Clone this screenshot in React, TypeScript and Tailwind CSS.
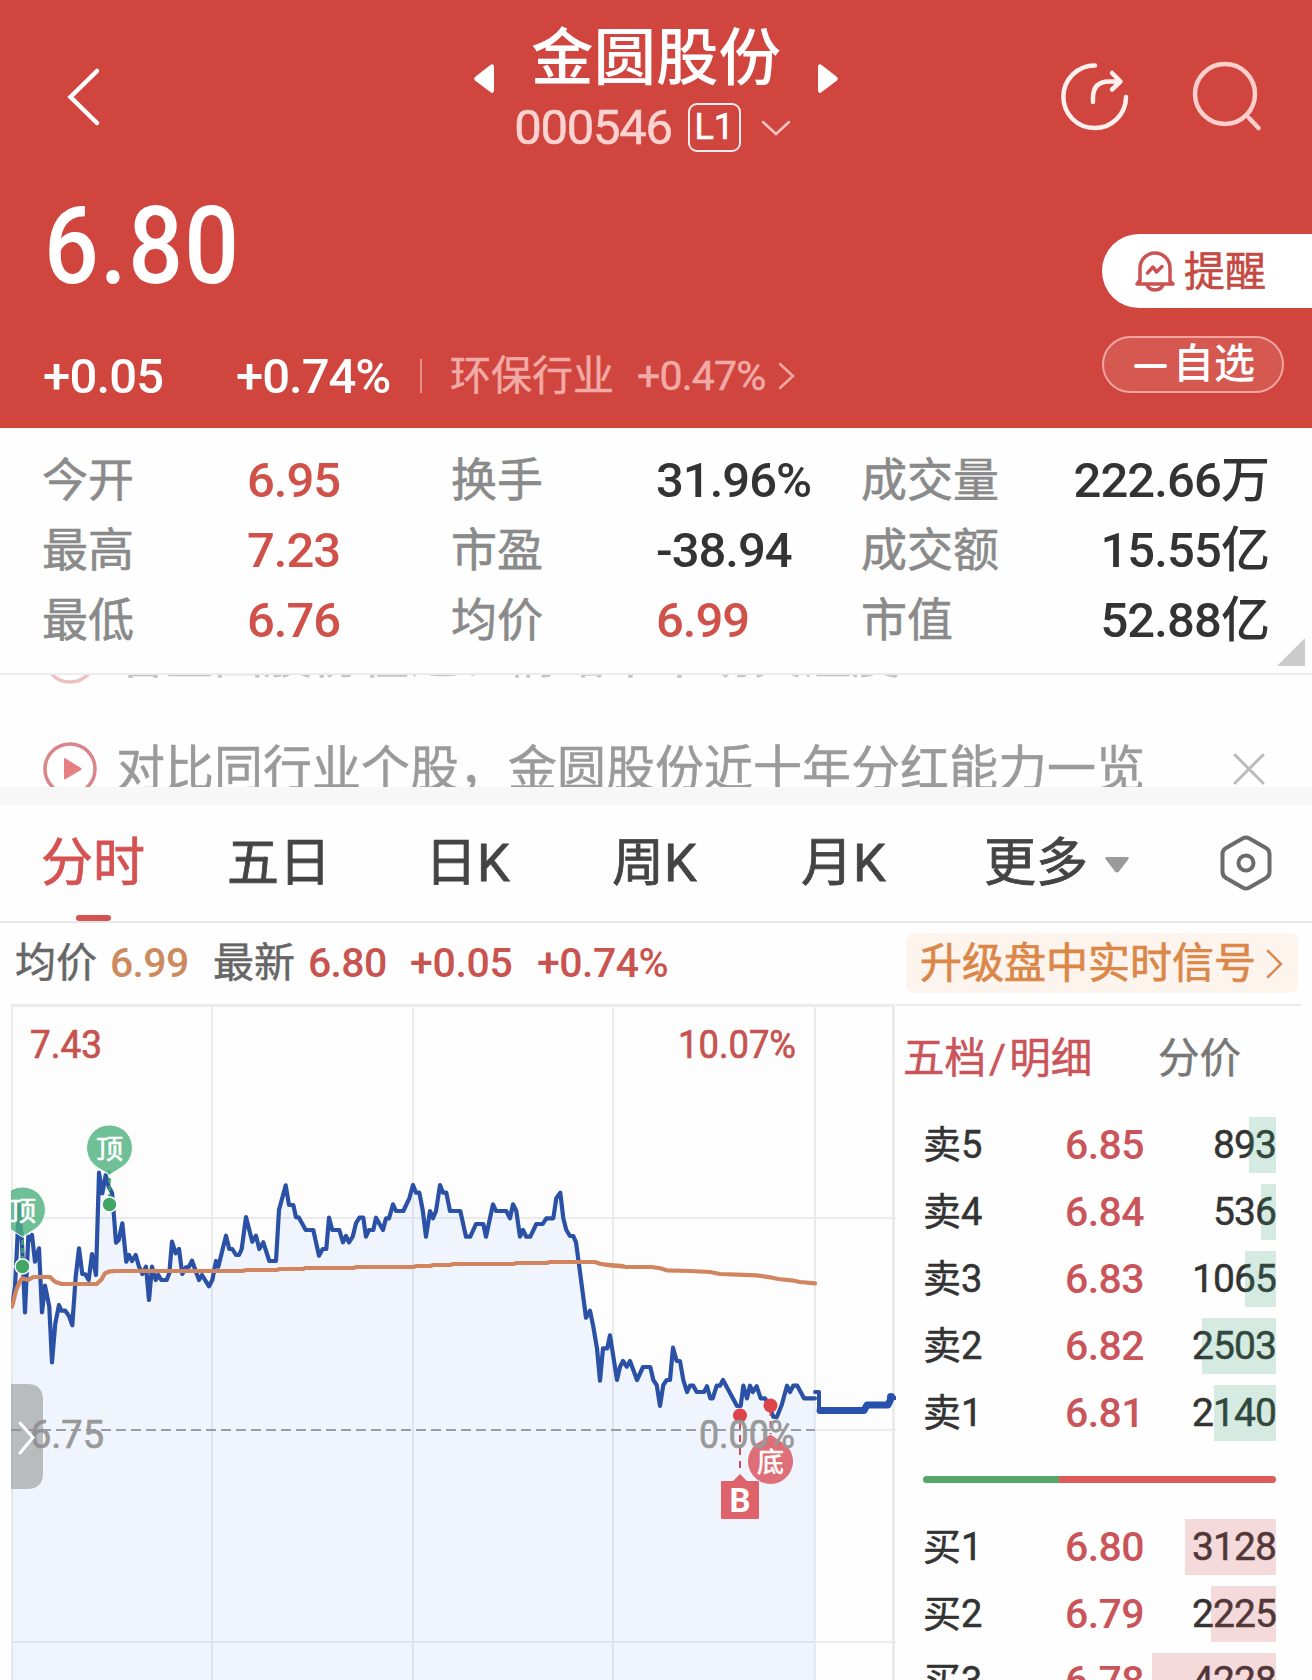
import React from 'react';

interface OrderLevel {
  label: string;
  price: string;
  volume: string;
  bar: number;
}

const SELLS: OrderLevel[] = [
  { label: '卖5', price: '6.85', volume: '893', bar: 27 },
  { label: '卖4', price: '6.84', volume: '536', bar: 15 },
  { label: '卖3', price: '6.83', volume: '1065', bar: 31 },
  { label: '卖2', price: '6.82', volume: '2503', bar: 74 },
  { label: '卖1', price: '6.81', volume: '2140', bar: 62 },
];

const BUYS: OrderLevel[] = [
  { label: '买1', price: '6.80', volume: '3128', bar: 91 },
  { label: '买2', price: '6.79', volume: '2225', bar: 65 },
  { label: '买3', price: '6.78', volume: '4228', bar: 124 },
];

const STATS = [
  [
    { label: '今开', value: '6.95', up: true },
    { label: '换手', value: '31.96%', up: false },
    { label: '成交量', value: '222.66万', up: false },
  ],
  [
    { label: '最高', value: '7.23', up: true },
    { label: '市盈', value: '-38.94', up: false },
    { label: '成交额', value: '15.55亿', up: false },
  ],
  [
    { label: '最低', value: '6.76', up: true },
    { label: '均价', value: '6.99', up: true },
    { label: '市值', value: '52.88亿', up: false },
  ],
];

// Each segment: origin in px, points in thirds of a px
type Segment = { x: number; y: number; pts: string };

const PRICE: Segment[] = [
  {
    x: 0,
    y: 76,
    pts: '38,670 45,620 50,520 57,375 66,490 75,697 85,470 90,480 96,465 105,545 117,505 126,697 135,617 148,680 156,847 166,730 177,675 184,692 196,692 207,708 217,736 227,590 237,505 247,582 256,583 266,600 276,522 288,585 297,278 307,340 317,285 326,320 336,338 342,410 348,488 356,480 367,430 379,545 387,525 396,543 407,525 417,560 427,582 438,560 447,660 456,560 467,600 475,585 484,600 500,600 508,580 516,485 527,520 537,507 547,582 558,562 567,560 576,542 597,600 606,585 627,619 637,600 648,543 655,560 678,467 688,507 697,507 708,525 717,525 725,507 738,411 757,485 768,467 778,507 790,487 808,543 828,543 837,390 857,316 867,375 880,375 888,412 896,412',
  },
  {
    x: 300,
    y: 136,
    pts: '17,270 40,270 57,347 68,327 79,327 87,233 97,270 118,270 129,307 138,288 147,307 158,290 168,250 178,233 190,233 198,290 207,270 220,270 228,233 249,270 258,235 267,235 279,193 288,213 310,213 328,175 339,135 348,158 358,158 368,210 378,290 390,213 399,235 408,213 420,135 429,158 439,158 450,213 481,213 498,290 511,290 528,252 550,252 558,290 579,193 588,213 619,213 630,235 639,193 649,213 660,290 669,270 679,290 691,290 709,252 728,252 739,235 760,235 769,175 781,158 790,235 799,270 810,288 820,288 828,307 838,380 858,533 870,512 880,560 891,625 900,722 909,625 922,625 930,586',
  },
  {
    x: 600,
    y: 176,
    pts: '51,600 60,560 69,543 80,560 90,543 111,600 129,561 151,561 160,600 170,615 180,678 190,615 200,600 210,600 219,503 230,543 240,543 250,600 261,636 270,617 280,617 290,636 312,636 321,619 331,655 338,655 350,617 360,617 369,600 411,678 422,678 430,617 441,655 450,617 458,636 470,619 482,655 495,655 505,670 520,710 530,712 545,675 561,617 570,636 580,617 592,617 612,655 645,655',
  },
];

const AVERAGE: Segment[] = [
  {
    x: 0,
    y: 76,
    pts: '36,680 48,632 57,610 66,595 85,600 100,591 150,591 165,605 185,612 290,612 305,598 315,580 330,574 350,573 727,573 740,570 830,570 840,567 910,567',
  },
  {
    x: 300,
    y: 136,
    pts: '15,384 160,384 170,381 340,381 350,378 390,378 400,375 450,375 460,372 640,372 650,369 740,369 750,366 885,366 900,371 920,375 945,378 970,378',
  },
  {
    x: 600,
    y: 176,
    pts: '0,252 45,257 80,261 155,261 180,265 200,271 270,273 330,276 360,282 410,284 470,286 510,292 535,297 575,301 600,306 645,310',
  },
];

const toPoints = (segments: Segment[]) =>
  segments
    .flatMap(s =>
      s.pts.split(' ').map(p => {
        const [px, py] = p.split(',').map(Number);
        return `${(s.x + px / 3).toFixed(1)},${(s.y + py / 3).toFixed(1)}`;
      })
    )
    .join(' ');

const pricePoints = toPoints(PRICE);
const averagePoints = toPoints(AVERAGE);

const Header: React.FC = () => (
  <header className="h-[428px] bg-[#d0453e] text-white">
    <div className="h-[180px] flex justify-between">
      <svg width="120" height="180" viewBox="0 0 120 180" fill="none" stroke="#fff" strokeWidth="4.5" strokeLinecap="round">
        <path d="M97 71 70.5 97 97 123" />
      </svg>
      <div className="flex flex-col items-center w-[400px] pt-[22px]">
        <div className="flex items-start justify-between w-[364px] h-[80px]">
          <svg width="20" height="30" viewBox="0 0 20 30" className="mt-[42px]" fill="#fff">
            <path d="M17 0.6Q20 -0.5 20 3V26Q20 30 17 28.5L1 16.5Q-0.5 15 1 13Z" />
          </svg>
          <h1 className="mt-[4px] text-[62.5px] leading-[66px] font-medium">金圆股份</h1>
          <svg width="20" height="30" viewBox="0 0 20 30" className="mt-[42px]" fill="#fff">
            <path d="M3 0.6Q0 -0.5 0 3V26Q0 30 3 28.5L19 16.5Q20.5 15 19 13Z" />
          </svg>
        </div>
        <div className="flex items-center h-[50px] pr-[7px]">
          <span className="text-[49px] leading-none tracking-[-1.3px] text-[#fbd3d1] [-webkit-text-stroke:0.5px]">000546</span>
          <span className="flex items-center justify-center w-[53px] h-[49px] ml-[16px] border-2 border-white/90 rounded-[9px] text-[36px] leading-none [-webkit-text-stroke:0.6px]">L1</span>
          <svg width="30" height="16" viewBox="0 0 30 16" className="ml-[20px] mt-[2px]" fill="none" stroke="#f8c3c0" strokeWidth="2.5" strokeLinecap="round">
            <path d="M2 2 15 14 28 2" />
          </svg>
        </div>
      </div>
      <svg width="272" height="180" viewBox="1040 0 272 180" className="-ml-[152px]" fill="none" strokeLinecap="round" strokeLinejoin="round" strokeWidth="4.5">
        <g stroke="#fff0ef">
          <path d="M1095 65.5A31.3 31.3 0 1 0 1126 97" />
          <path d="M1093 102V98Q1093 81.5 1109 81.5H1119M1112 73 1120.5 81.5 1112 89.5" />
        </g>
        <g stroke="#ffcfcd">
          <circle cx="1225" cy="94" r="30" />
          <path d="M1249 118 1258.5 128" />
        </g>
      </svg>
    </div>
    <div className="flex justify-between">
      <div>
        <div className="ml-[44px] mt-[13px] text-[107px] leading-none font-medium tracking-[1.5px] origin-left scale-x-90">6.80</div>
        <div className="flex items-center h-[54px] mt-[49px] pl-[43px] leading-none">
          <span className="w-[193px] text-[49px] font-medium tracking-[-0.8px]">+0.05</span>
          <span className="w-[184px] text-[49px] font-medium tracking-[-1px]">+0.74%</span>
          <span className="w-[2px] h-[34px] bg-white/40" />
          <span className="ml-[28px] text-[41px] text-[#f2aaa7] [-webkit-text-stroke:0.5px]">环保行业</span>
          <span className="ml-[23px] text-[41px] text-[#f2aaa7] tracking-[-0.8px] [-webkit-text-stroke:0.5px]">+0.47%</span>
          <svg width="18" height="28" viewBox="0 0 18 28" className="ml-[13px]" fill="none" stroke="#f2aaa7" strokeWidth="2.5" strokeLinecap="round">
            <path d="M2 2 15 14 2 26" />
          </svg>
        </div>
      </div>
      <div className="w-[210px] pt-[54px]">
        <button className="flex items-center w-full h-[74px] pl-[33px] bg-white rounded-l-full text-[41px] leading-none text-[#c44a43] [-webkit-text-stroke:0.6px]">
          <svg width="40" height="42" viewBox="0 0 40 42" fill="none" stroke="#cb5152" strokeWidth="3.5" strokeLinecap="round" strokeLinejoin="round">
            <path d="M5 31V18A15 15 0 0 1 35 18V31L38 34H2L5 30M12 34A8 6 0 0 0 28 34" />
            <path d="M12.5 23 18 17 21.5 22 27 16.5" />
          </svg>
          <span className="ml-[9px] pt-[2px]">提醒</span>
        </button>
        <button className="flex items-center w-[182px] h-[57px] mt-[28px] pl-[30px] border-2 border-[#f0a5a1] bg-white/10 rounded-full text-[41px] leading-none font-medium">
          <span className="w-[33px] h-[4px] rounded-full bg-white mt-[2px]" />
          <span className="ml-[6px]">自选</span>
        </button>
      </div>
    </div>
  </header>
);

const Stats: React.FC = () => (
  <section className="relative h-[247px] pt-[17px] pl-[42px] pr-[43px] border-b-2 border-[#ececec]">
    {STATS.map((row, i) => (
      <div key={i} className="grid grid-cols-[205px_204px_205px_205px_145px_1fr] items-center h-[70px] leading-none">
        {row.map((s, j) => (
          <React.Fragment key={s.label}>
            <span className="text-[46px] text-[#8a8a8a] [-webkit-text-stroke:0.6px]">{s.label}</span>
            <span
              className={
                'text-[49px] font-medium whitespace-nowrap ' +
                (s.up ? 'text-[#cf5149] ' : 'text-[#333] ') +
                (j === 2 ? 'text-right tracking-[-0.9px]' : 'tracking-[-1px]')
              }
            >
              {s.value}
            </span>
          </React.Fragment>
        ))}
      </div>
    ))}
    <svg width="28" height="28" viewBox="0 0 28 28" className="absolute right-[7px] bottom-[7px]" fill="#ccc">
      <path d="M28 0V28H0Z" />
    </svg>
  </section>
);

const News: React.FC = () => (
  <section className="h-[130px] border-b-[18px] border-[#f7f7f7] overflow-hidden text-[49px] leading-none [-webkit-text-stroke:0.5px]">
    <div className="flex items-center h-[54px] -mt-[46px] pl-[43px] text-[#c4c4c4]">
      <svg width="54" height="56" viewBox="0 0 54 56" fill="none" stroke="#ecc0c1" strokeWidth="3.5">
        <circle cx="27" cy="29" r="25" />
      </svg>
      <span className="ml-[19px]">看金圆股份在近、情绪中市场关注度</span>
    </div>
    <div className="flex items-center h-[54px] mt-[59px] pl-[43px] pr-[47px] text-[#9a9a9a]">
      <svg width="54" height="54" viewBox="0 0 54 54">
        <circle cx="27" cy="27" r="25" fill="none" stroke="#d98689" strokeWidth="3.5" />
        <path d="M21 17Q21 15.5 22.5 16.5L38 26Q39 27 38 28L22.5 37Q21 38 21 36.5Z" fill="#e57f82" />
      </svg>
      <span className="ml-[19px] flex-1 whitespace-nowrap">对比同行业个股，金圆股份近十年分红能力一览</span>
      <svg width="32" height="32" viewBox="0 0 32 32" fill="none" stroke="#bbb" strokeWidth="3" strokeLinecap="round">
        <path d="M2 2 30 30M30 2 2 30" />
      </svg>
    </div>
  </section>
);

const Tabs: React.FC = () => (
  <nav className="flex items-center h-[118px] border-b-2 border-[#e9e9e9] text-[52px] leading-none text-[#444] [-webkit-text-stroke:0.8px]">
    <div className="relative flex items-center h-full pt-[2px] ml-[41px] w-[186px] text-[#d55252]">
      分时
      <span className="absolute left-[35px] bottom-0 w-[35px] h-[6px] rounded-full bg-[#d55252]" />
    </div>
    <span className="w-[198px] pt-[2px]">五日</span>
    <span className="w-[187px] pt-[2px]">日K</span>
    <span className="w-[189px] pt-[2px]">周K</span>
    <span className="w-[183px] pt-[2px]">月K</span>
    <span className="pt-[2px]">更多</span>
    <svg width="24" height="16" viewBox="0 0 24 16" className="ml-[17px] mt-[3px]" fill="#9a9a9a">
      <path d="M2 0H22Q24.5 0 23.5 2L14 14.5Q12 16.5 10 14.5L0.5 2Q-0.5 0 2 0Z" />
    </svg>
    <svg width="52" height="56" viewBox="0 0 52 56" className="ml-auto mr-[40px]" fill="none" stroke="#6b6b6b" strokeWidth="4" strokeLinejoin="round">
      <path d="M23 3.2Q26 1.6 29 3.2L46 13Q49.5 15 49.5 19V37Q49.5 41 46 43L29 52.8Q26 54.4 23 52.8L6 43Q2.5 41 2.5 37V19Q2.5 15 6 13Z" />
      <circle cx="26" cy="28" r="7.5" />
    </svg>
  </nav>
);

const PriceSummary: React.FC = () => (
  <div className="flex items-center h-[81px] pl-[15px] pr-[14px] text-[41px] leading-none text-[#666]">
    <span className="[-webkit-text-stroke:0.5px]">均价</span>
    <span className="ml-[13px] w-[103px] tracking-[-0.7px] text-[#cb8b5f] font-medium">6.99</span>
    <span className="[-webkit-text-stroke:0.5px]">最新</span>
    <span className="ml-[13px] w-[102px] tracking-[-0.7px] text-[#c9534e] font-medium">6.80</span>
    <span className="w-[127px] tracking-[-0.3px] text-[#c9534e] font-medium">+0.05</span>
    <span className="tracking-[-0.5px] text-[#c9534e] font-medium">+0.74%</span>
    <button className="flex items-center ml-auto mb-[2px] w-[392px] h-[60px] pl-[14px] rounded-[8px] bg-[#fdf4ee] text-[#da8748] text-[42px] [-webkit-text-stroke:0.7px]">
      <span className="pt-[3px] whitespace-nowrap">升级盘中实时信号</span>
      <svg width="18" height="30" viewBox="0 0 18 30" className="shrink-0 ml-[10px] mt-[2px]" fill="none" stroke="#d98a50" strokeWidth="2.5" strokeLinecap="round">
        <path d="M2 2 15 15 2 28" />
      </svg>
    </button>
  </div>
);

const TopPin: React.FC<{ x: number; y: number }> = ({ x, y }) => (
  <g>
    <path d={`M${x} ${y + 22}V${y + 52}`} stroke="#3fa565" strokeWidth="2.5" strokeDasharray="5 3" />
    <path
      d={`M${x} ${y + 27}L${x - 12} ${y + 19.5}A23 23 0 1 1 ${x + 12} ${y + 19.5}Z`}
      fill="#4bb07c"
      fillOpacity="0.8"
      stroke="#fff"
      strokeWidth="1"
    />
    <text x={x} y={y + 10.5} textAnchor="middle" fontSize="27" fill="#fff" stroke="#fff" strokeWidth="0.6">顶</text>
    <circle cx={x} cy={y + 56.5} r="7.5" fill="#43a563" stroke="#fff" strokeWidth="1.5" />
  </g>
);

const Chart: React.FC = () => (
  <svg width="896" height="676" viewBox="0 0 896 676" className="shrink-0">
    <defs>
      <clipPath id="plot">
        <rect x="11" y="0" width="885" height="676" />
      </clipPath>
    </defs>
    <rect x="12" y="2" width="882" height="674" fill="#fdfdfd" />
    <g stroke="#ebebeb" strokeWidth="2">
      <path d="M11 1.5H895" strokeWidth="3" />
      <path d="M12 0V676M212 0V676M413 0V676M613 0V676M815 0V676" />
      <path d="M893.5 0V676" strokeWidth="3" />
      <path d="M11 214H896M11 638H896M815 426H896" />
    </g>
    <polygon points={`12,676 ${pricePoints} 815,676`} fill="#3078ff" fillOpacity="0.063" />
    <path d="M11 426H815" stroke="#9d9ea3" strokeWidth="2" strokeDasharray="10 5" />

    <g clipPath="url(#plot)" fill="none" strokeLinejoin="round" strokeLinecap="round">
      <polyline points={pricePoints} stroke="#2a51a6" strokeWidth="4.2" />
      <path d="M815 388H819V406" stroke="#2a51a6" strokeWidth="4" />
      <path d="M820 406.5H864L867 401H888L891 394.5" stroke="#2850ae" strokeWidth="7" />
      <circle cx="891" cy="393" r="4" fill="#2850ae" />
      <path d="M890 394H896" stroke="#2850ae" strokeWidth="4" />
      <polyline points={averagePoints} stroke="#d1855e" strokeWidth="4.2" />
    </g>

    <g clipPath="url(#plot)">
      <TopPin x={22.5} y={206} />
      <TopPin x={109.5} y={144} />
    </g>

    <g>
      <path d="M740 418V467" stroke="#c8505a" strokeWidth="2" strokeDasharray="7 6" />
      <path d="M770.5 405V430" stroke="#c8505a" strokeWidth="2" strokeDasharray="7 5" />
      <circle cx="740" cy="411.5" r="7" fill="#dc4449" />
      <circle cx="770.5" cy="401.5" r="7" fill="#dc4449" />
      <path d="M770.5 430.5L780 437A22.5 22.5 0 1 1 761 437Z" fill="#d94d58" fillOpacity="0.8" />
      <text x="770.5" y="467.5" textAnchor="middle" fontSize="27" fill="#fff" stroke="#fff" strokeWidth="0.6">底</text>
      <path d="M740 470 747 477H758Q759 477 759 478V514Q759 515 758 515H722Q721 515 721 514V478Q721 477 722 477H733Z" fill="#dd6269" />
      <text x="740" y="508" textAnchor="middle" fontSize="33" fontWeight="700" fill="#fff">B</text>
    </g>

    <g fontSize="39">
      <g fill="#c6534f" stroke="#c6534f" strokeWidth="0.7">
        <text x="30" y="54" textLength="72" lengthAdjust="spacingAndGlyphs">7.43</text>
        <text x="678" y="54" textLength="118" lengthAdjust="spacingAndGlyphs">10.07%</text>
      </g>
      <g fill="#999" stroke="#999" strokeWidth="0.7">
        <text x="30" y="444" textLength="74" lengthAdjust="spacingAndGlyphs">6.75</text>
        <text x="699" y="444" textLength="96" lengthAdjust="spacingAndGlyphs">0.00%</text>
      </g>
    </g>

    <path d="M11 380H27Q43 380 43 396V469Q43 485 27 485H11Z" fill="#8c8c8c" fillOpacity="0.55" />
    <path d="M20 419 33 433.5 20 449" fill="none" stroke="#fff" strokeWidth="3" strokeLinecap="round" />
  </svg>
);

const OrderRow: React.FC<{ level: OrderLevel; sell?: boolean }> = ({ level, sell }) => (
  <div className="relative flex items-center shrink-0 h-[56px] mb-[11px] leading-none">
    <span className="w-[142px] text-[38px] text-[#333] [-webkit-text-stroke:0.5px]">{level.label}</span>
    <span className="text-[41px] tracking-[-0.6px] font-medium text-[#c9555a]">{level.price}</span>
    <span className="ml-auto text-[39px] tracking-[-0.9px] text-[#333] [-webkit-text-stroke:0.5px]">{level.volume}</span>
    <span
      className={'absolute right-0 top-0 h-full ' + (sell ? 'bg-[#32a06e]/20' : 'bg-[#d24b50]/20')}
      style={{ width: level.bar }}
    />
  </div>
);

const OrderBook: React.FC = () => (
  <aside className="w-[405px] border-t-2 border-[#ebebeb]">
    <div className="flex items-center h-[104px] pt-[2px] pl-[7px] text-[41.5px] leading-none [-webkit-text-stroke:0.5px]">
      <span className="w-[255px] text-[#c9555a]">
        五档<span className="px-[3px]">/</span>明细
      </span>
      <span className="text-[#777]">分价</span>
    </div>
    <div className="flex flex-col pt-[7px] pl-[27px] pr-[25px]">
      {SELLS.map(level => (
        <OrderRow key={level.label} level={level} sell />
      ))}
      <div className="flex h-[7px] mt-[24px] mb-[36px] rounded-full overflow-hidden">
        <span className="w-[136px] bg-[#54a768]" />
        <span className="flex-1 bg-[#dd5b58]" />
      </div>
      {BUYS.map(level => (
        <OrderRow key={level.label} level={level} />
      ))}
    </div>
  </aside>
);

export default function App() {
  return (
    <div className="w-[1312px] h-[1680px] overflow-hidden bg-[#fefefe] font-[Roboto,'Noto_Sans_CJK_SC',sans-serif]">
      <Header />
      <Stats />
      <News />
      <Tabs />
      <PriceSummary />
      <div className="flex h-[676px] overflow-hidden">
        <Chart />
        <OrderBook />
      </div>
    </div>
  );
}
